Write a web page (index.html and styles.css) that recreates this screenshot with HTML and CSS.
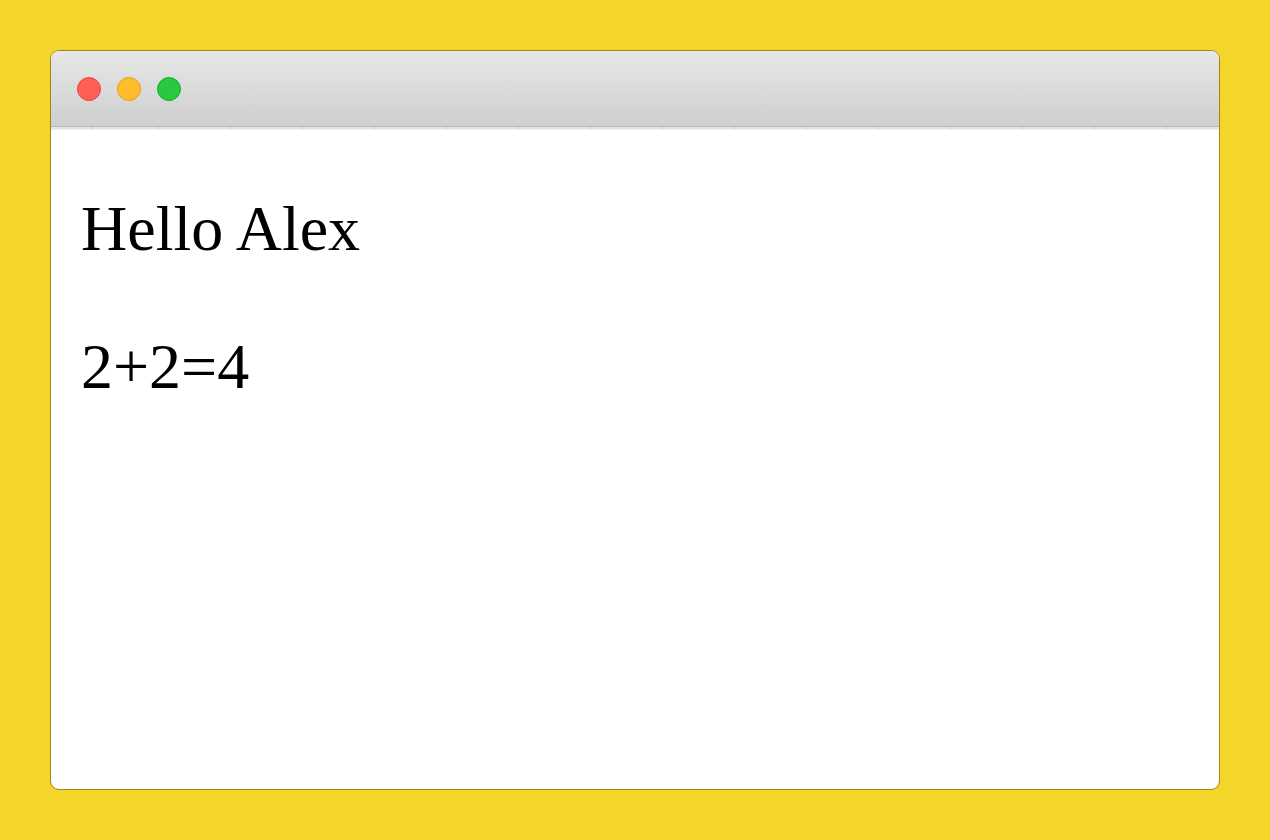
FILE: index.html
```html
<!DOCTYPE html>
<html lang="en">
<head>
<meta charset="utf-8">
<title>Hello Alex</title>
<link rel="stylesheet" href="styles.css">
</head>
<body>
  <div class="window">
    <div class="titlebar">
      <span class="light red"></span>
      <span class="light yellow"></span>
      <span class="light green"></span>
    </div>
    <div class="tabstrip"></div>
    <div class="content">
      <p class="line">Hello Alex</p>
      <p class="line">2+2=4</p>
    </div>
  </div>
</body>
</html>
```
FILE: styles.css
```css
html, body {
  margin: 0;
  padding: 0;
  height: 100%;
}
body {
  background: #f4d62b;
  padding: 50px;
  box-sizing: border-box;
  font-family: "Liberation Serif", "Times New Roman", serif;
}
.window {
  width: 1170px;
  height: 740px;
  box-sizing: border-box;
  border: 1px solid #9c8719;
  border-radius: 9px;
  background: #ffffff;
  overflow: hidden;
  display: flex;
  flex-direction: column;
}
.titlebar {
  height: 75px;
  flex: none;
  background: linear-gradient(#e7e7e7, #cfcfcf);
  border-bottom: 1px solid #b9b9b9;
  display: flex;
  align-items: center;
  gap: 16px;
  padding-left: 26px;
}
.light {
  width: 24px;
  height: 24px;
  border-radius: 50%;
  box-sizing: border-box;
}
.red {
  background: #ff5f57;
  border: 1px solid #e2463f;
}
.yellow {
  background: #ffbd2e;
  border: 1px solid #e1a116;
}
.green {
  background: #28c940;
  border: 1px solid #1aab29;
}
.tabstrip {
  height: 3px;
  flex: none;
  background:
    linear-gradient(#d2d2d2, #d2d2d2) 40px 0 / 2px 2px no-repeat,
    repeating-linear-gradient(90deg, transparent 0, transparent 70px, #d2d2d2 70px, #d2d2d2 72px) 36px 0 / 100% 2px no-repeat,
    linear-gradient(#e4e4e4 66%, #efefef 66%);
}
.content {
  padding: 62px 30px 0;
}
.line {
  margin: 0 0 64px;
  font-size: 64px;
  line-height: 74px;
  color: #000;
}
```
